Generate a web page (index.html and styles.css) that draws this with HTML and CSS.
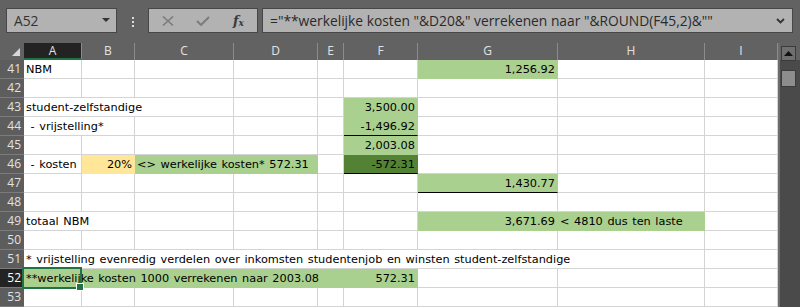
FILE: index.html
```html
<!DOCTYPE html>
<html lang="nl">
<head>
    <meta charset="UTF-8">
    <title>Berekening NBM</title>
    <link rel="stylesheet" href="styles.css">
</head>
<body>

    <div class="toolbar">
        <div class="namebox">
            <span>A52</span>
            <svg width="8" height="5" viewBox="0 0 8 5"><path d="M0 0h8L4 4z" fill="#333"/></svg>
        </div>
        <div class="grip"><i></i><i></i><i></i></div>
        <div class="fxbtns">
            <svg width="12" height="10" viewBox="0 0 12 10"><path d="M1 0.5l10 9M11 0.5l-10 9" stroke="#7c7c7c" stroke-width="1.6"/></svg>
            <svg width="14" height="10" viewBox="0 0 14 10"><path d="M1 5l4 4 8-8" stroke="#7c7c7c" stroke-width="2" fill="none"/></svg>
            <span class="fx">f<sub>x</sub></span>
        </div>
        <div class="formula">
            <span>="**werkelijke kosten "&amp;D20&amp;" verrekenen naar "&amp;ROUND(F45,2)&amp;""</span>
            <svg width="9" height="6" viewBox="0 0 9 6"><path d="M1 1l3.5 3.5L8 1" stroke="#333" stroke-width="1.8" fill="none"/></svg>
        </div>
    </div>

    <div class="main">
        <div class="sheet">
            <div class="ch corner"><span class="tri"></span></div>
            <div class="ch sel">A</div>
            <div class="ch">B</div>
            <div class="ch">C</div>
            <div class="ch">D</div>
            <div class="ch">E</div>
            <div class="ch">F</div>
            <div class="ch">G</div>
            <div class="ch">H</div>
            <div class="ch">I</div>

            <div class="rh">41</div>
            <div class="c">NBM</div><div class="c"></div><div class="c"></div><div class="c"></div><div class="c"></div><div class="c"></div>
            <div class="c num g">1,256.92</div><div class="c"></div><div class="c"></div>

            <div class="rh">42</div>
            <div class="c"></div><div class="c"></div><div class="c"></div><div class="c"></div><div class="c"></div><div class="c"></div><div class="c"></div><div class="c"></div><div class="c"></div>

            <div class="rh">43</div>
            <div class="c s3">student-zelfstandige</div><div class="c"></div><div class="c"></div>
            <div class="c num g">3,500.00</div><div class="c"></div><div class="c"></div><div class="c"></div>

            <div class="rh">44</div>
            <div class="c s2">&nbsp;- vrijstelling*</div><div class="c"></div><div class="c"></div><div class="c"></div>
            <div class="c num g bb">-1,496.92</div><div class="c"></div><div class="c"></div><div class="c"></div>

            <div class="rh">45</div>
            <div class="c"></div><div class="c"></div><div class="c"></div><div class="c"></div><div class="c"></div>
            <div class="c num g">2,003.08</div><div class="c"></div><div class="c"></div><div class="c"></div>

            <div class="rh">46</div>
            <div class="c">&nbsp;- kosten</div>
            <div class="c num y">20%</div>
            <div class="c s2 g">&lt;&gt; werkelijke kosten* 572.31</div>
            <div class="c"></div>
            <div class="c num dg bb">-572.31</div><div class="c"></div><div class="c"></div><div class="c"></div>

            <div class="rh">47</div>
            <div class="c"></div><div class="c"></div><div class="c"></div><div class="c"></div><div class="c"></div><div class="c"></div>
            <div class="c num g bb">1,430.77</div><div class="c"></div><div class="c"></div>

            <div class="rh">48</div>
            <div class="c"></div><div class="c"></div><div class="c"></div><div class="c"></div><div class="c"></div><div class="c"></div><div class="c"></div><div class="c"></div><div class="c"></div>

            <div class="rh">49</div>
            <div class="c s2">totaal NBM</div><div class="c"></div><div class="c"></div><div class="c"></div><div class="c"></div>
            <div class="c num g">3,671.69</div>
            <div class="c g">&lt; 4810 dus ten laste</div>
            <div class="c"></div>

            <div class="rh">50</div>
            <div class="c"></div><div class="c"></div><div class="c"></div><div class="c"></div><div class="c"></div><div class="c"></div><div class="c"></div><div class="c"></div><div class="c"></div>

            <div class="rh">51</div>
            <div class="c s8">* vrijstelling evenredig verdelen over inkomsten studentenjob en winsten student-zelfstandige</div>
            <div class="c"></div>

            <div class="rh active">52</div>
            <div class="c s5 g current">**werkelijke kosten 1000 verrekenen naar 2003.08<span class="cursor"></span></div>
            <div class="c num g">572.31</div><div class="c"></div><div class="c"></div><div class="c"></div>

            <div class="rh">53</div>
            <div class="c"></div><div class="c"></div><div class="c"></div><div class="c"></div><div class="c"></div><div class="c"></div><div class="c"></div><div class="c"></div><div class="c"></div>
        </div>

        <div class="vscroll">
            <div class="up"><svg width="9" height="5" viewBox="0 0 9 5"><path d="M0 5L4.5 0 9 5z" fill="#111"/></svg></div>
            <div class="thumb"></div>
        </div>
    </div>

</body>
</html>
```

FILE: styles.css
```css
* {
    box-sizing: border-box;
}
body {
    margin: 0;
    background: #626262;
    font-family: "Open Sans", sans-serif;
    overflow: hidden;
}

/* formula bar */
.toolbar {
    display: flex;
    align-items: flex-start;
    height: 43px;
    padding: 8px 0 0 6px;
}
.namebox {
    width: 111px;
    height: 25px;
    background: #b2b2b2;
    border: 1px solid #474747;
    display: flex;
    align-items: center;
    justify-content: space-between;
    padding: 0 6px 0 7px;
    font-size: 13.8px;
    color: #333;
}
.grip {
    width: 31px;
    display: flex;
    flex-direction: column;
    align-items: center;
    gap: 2px;
    padding-top: 9px;
}
.grip i {
    width: 2px;
    height: 2px;
    background: #dcdcdc;
}
.fxbtns {
    width: 110px;
    height: 25px;
    background: #b2b2b2;
    border: 1px solid #474747;
    display: flex;
    align-items: center;
    gap: 22px;
    padding-left: 13px;
}
.fx {
    font-family: "DejaVu Serif", serif;
    font-style: italic;
    font-weight: bold;
    font-size: 13px;
    color: #3a3a3a;
    margin-left: 1px;
}
.fx sub {
    font-size: 9px;
    vertical-align: -1px;
}
.formula {
    width: 531px;
    height: 25px;
    margin-left: 4px;
    background: #b2b2b2;
    border: 1px solid #474747;
    display: flex;
    align-items: center;
    justify-content: space-between;
    padding: 0 7px 0 7px;
    font-size: 13.8px;
    color: #2a2a2a;
    white-space: nowrap;
}

/* grid */
.main {
    display: flex;
}
.sheet {
    display: grid;
    grid-template-columns: 24px 58px 53px 99px 84px 26px 74px 140px 147px 73px;
    grid-template-rows: 17px;
    grid-auto-rows: 19px;
    background: #fff;
    font-family: "DejaVu Sans", sans-serif;
    font-size: 11.3px;
    word-spacing: 1px;
    color: #000;
}
.ch {
    background: #626262;
    color: #e2e2e2;
    font-family: "Open Sans", sans-serif;
    font-size: 12px;
    text-align: center;
    line-height: 16px;
    border-right: 1px solid #8c8c8c;
}
.ch:last-of-type {
    border-right: none;
}
.ch.sel {
    background: #232323;
    border-bottom: 2px solid #217346;
    line-height: 15px;
}
.corner {
    position: relative;
    border-right: none;
}
.tri {
    position: absolute;
    left: 12px;
    top: 5px;
    border-left: 8px solid transparent;
    border-bottom: 8px solid #d8d8d8;
}
.rh {
    background: #5d5d5d;
    color: #e2e2e2;
    font-family: "Open Sans", sans-serif;
    font-size: 12px;
    word-spacing: 0;
    text-align: right;
    padding-right: 3px;
    line-height: 18px;
    border-bottom: 1px solid #7c7c7c;
}
.rh.active {
    background: #232323;
    color: #fff;
}
.c {
    border-right: 1px solid #d4d4d4;
    border-bottom: 1px solid #d4d4d4;
    padding: 0 2px 1px 2px;
    display: flex;
    align-items: flex-end;
    white-space: pre;
    line-height: 14px;
}
.num {
    justify-content: flex-end;
}
.s2 { grid-column: span 2; }
.s3 { grid-column: span 3; }
.s5 { grid-column: span 5; }
.s8 { grid-column: span 8; }

.g {
    background: #a9d08e;
    border-color: #a9d08e;
}
.dg {
    background: #548235;
    border-color: #548235;
}
.y {
    background: #ffe699;
    border-color: #ffe699;
}
.bb {
    border-bottom-color: #000;
}

/* active cell A52 */
.current {
    position: relative;
}
.cursor {
    position: absolute;
    left: -2px;
    top: -2px;
    width: 60px;
    height: 22px;
    border: 2px solid #217346;
}
.cursor::after {
    content: "";
    position: absolute;
    right: -4px;
    bottom: -4px;
    width: 6px;
    height: 6px;
    background: #217346;
    border: 1px solid #fff;
}

/* scrollbar */
.vscroll {
    flex: 1;
    height: 264px;
    background: linear-gradient(#626262 0 17px, #4a4a4a 17px);
    border-left: 2px solid #6c6c6c;
    padding: 3px 0 0 1px;
}
.up {
    width: 15px;
    height: 15px;
    background: #6f6f6f;
    border: 1px solid #3b3b3b;
    display: flex;
    align-items: center;
    justify-content: center;
}
.thumb {
    width: 15px;
    height: 17px;
    margin-top: 9px;
    background: #8d8d8d;
    border: 1px solid #3b3b3b;
}
```
